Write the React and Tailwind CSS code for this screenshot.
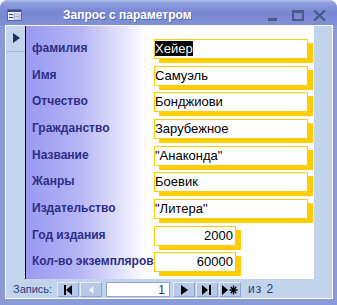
const fields = [
  { label: "фамилия", value: "Хейер", selected: true },
  { label: "Имя", value: "Самуэль" },
  { label: "Отчество", value: "Бонджиови" },
  { label: "Гражданство", value: "Зарубежное" },
  { label: "Название", value: "\"Анаконда\"" },
  { label: "Жанры", value: "Боевик" },
  { label: "Издательство", value: "\"Литера\"" },
  { label: "Год издания", value: "2000", number: true },
  { label: "Кол-во экземпляров", value: "60000", number: true },
];

function FormIcon() {
  return (
    <svg width="15" height="12" viewBox="0 0 15 12">
      <rect x="0.5" y="0.5" width="14" height="11" fill="#e8ecf6" stroke="#5a6aa0" />
      <rect x="1" y="1" width="13" height="2" fill="#3c4c90" />
      <rect x="2" y="5" width="4" height="1" fill="#3c4c90" />
      <rect x="7" y="5" width="6" height="2" fill="#ffffff" stroke="#6a7ab0" strokeWidth="0.6" />
      <rect x="2" y="8" width="4" height="1" fill="#3c4c90" />
      <rect x="7" y="8" width="6" height="2" fill="#ffffff" stroke="#6a7ab0" strokeWidth="0.6" />
    </svg>
  );
}

function NavButton({ children }) {
  return (
    <div className="flex h-[15px] w-[22px] items-center justify-center border border-t-[#e4ecf8] border-l-[#e4ecf8] border-r-[#8ea4cc] border-b-[#8ea4cc] bg-[#b7c9e8]">
      {children}
    </div>
  );
}

export default function App() {
  return (
    <div className="h-[305px] w-[337px] overflow-hidden bg-white font-['Liberation_Sans',Arial,sans-serif]">
      <div className="flex h-[305px] flex-col rounded-t-[8px] bg-[#8a9ad8] px-[5px] pb-[6px] pr-[4px]">
        {/* title bar */}
        <div className="-mx-[5px] -mr-[4px] flex h-[25px] items-center rounded-t-[8px] bg-[linear-gradient(to_bottom,#b6c1ee_0px,#8e9dde_3px,#7787d3_12px,#7f8fd7_100%)] pl-[7px] pr-[11px] pt-[5px]">
          <FormIcon />
          <span className="ml-[41px] text-[12px] font-bold text-white [text-shadow:1px_1px_0_#5a6aa8]">
            Запрос с параметром
          </span>
          <div className="ml-auto flex items-center">
            <div className="mt-[8px] h-[3px] w-[9px] bg-[#4c5885]" />
            <div className="ml-[15px] h-[11px] w-[12px] border-2 border-t-[3px] border-[#4c5885]" />
            <svg className="ml-[9px]" width="13" height="11" viewBox="0 0 13 11">
              <path d="M1 0.5 L12 10.5 M12 0.5 L1 10.5" stroke="#4c5885" strokeWidth="2.2" />
            </svg>
          </div>
        </div>

        {/* client area */}
        <div className="flex flex-1 flex-col border border-white bg-[#c2d3ec]">
          <div className="flex flex-1">
            {/* record selector */}
            <div className="w-[20px] border-r border-black bg-[#c3d4ec]">
              <div className="flex h-[26px] items-start justify-center border-b border-[#a8bcdc] pl-[1px] pt-[7px]">
                <svg width="7" height="10" viewBox="0 0 7 10">
                  <path d="M0 0 L7 5 L0 10 Z" fill="#1d2f5f" />
                </svg>
              </div>
            </div>

            {/* form body */}
            <div className="flex w-[288px] flex-col bg-[linear-gradient(to_right,#9a9af2_0%,#b4b4f6_18%,#e6e6fc_34%,#ffffff_42%)] pl-[6px] pt-[13px]">
              {fields.map((f) => (
                <div key={f.label} className="flex h-[26.67px] shrink-0 items-start">
                  <div className="w-[122px] whitespace-nowrap pt-[1px] text-[12px] font-bold leading-[16px] text-[#2e2e86]">
                    {f.label}
                  </div>
                  <div
                    className={
                      (f.number ? "w-[82px] pr-[2px] text-right " : "w-[154px] ") +
                      "h-[20px] border border-[#ffcc00] bg-white pt-[1px] text-[13px] leading-[15px] text-black shadow-[5px_4px_0_#ffcc00]"
                    }
                  >
                    {f.selected ? (
                      <span className="inline-block h-[15px] bg-black text-white">{f.value}</span>
                    ) : (
                      f.value
                    )}
                  </div>
                </div>
              ))}
            </div>

            {/* right empty space */}
            <div className="flex-1 bg-[#c2d3ec]" />
          </div>

          {/* navigation bar */}
          <div className="flex h-[19px] items-end bg-[#c2d3ec] pb-[1px] pl-[7px]">
            <span className="mb-[2px] w-[44px] text-[11px] leading-[12px] text-[#283d7e]">Запись:</span>
            <div className="flex gap-[1px]">
              <NavButton>
                <svg width="10" height="10" viewBox="0 0 10 10">
                  <rect x="1" y="0" width="2" height="10" fill="#000" />
                  <path d="M9 0 L3 5 L9 10 Z" fill="#000" />
                </svg>
              </NavButton>
              <NavButton>
                <svg width="8" height="10" viewBox="0 0 8 10">
                  <path d="M7 0 L1 5 L7 10 Z" fill="#eef3fa" stroke="#9fb2d4" strokeWidth="0.6" />
                </svg>
              </NavButton>
            </div>
            <div className="ml-[4px] flex h-[15px] w-[64px] items-center justify-end border border-[#8ea4cc] bg-white pr-[4px] text-[12px] text-[#1f3070]">
              1
            </div>
            <div className="ml-[3px] flex gap-[1px]">
              <NavButton>
                <svg width="7" height="10" viewBox="0 0 7 10">
                  <path d="M0 0 L7 5 L0 10 Z" fill="#000" />
                </svg>
              </NavButton>
              <NavButton>
                <svg width="10" height="10" viewBox="0 0 10 10">
                  <path d="M0 0 L6 5 L0 10 Z" fill="#000" />
                  <rect x="7" y="0" width="2" height="10" fill="#000" />
                </svg>
              </NavButton>
              <NavButton>
                <svg width="16" height="10" viewBox="0 0 16 10">
                  <path d="M0 0 L6 5 L0 10 Z" fill="#000" />
                  <path d="M11.5 0.5 V9.5 M7.5 5 H15.5 M8.7 1.8 L14.3 8.2 M14.3 1.8 L8.7 8.2" stroke="#000" strokeWidth="1.3" />
                </svg>
              </NavButton>
            </div>
            <span className="mb-[2px] ml-[7px] text-[12px] leading-[12px] tracking-[1px] text-[#283d7e]">из 2</span>
          </div>
        </div>
      </div>
    </div>
  );
}
